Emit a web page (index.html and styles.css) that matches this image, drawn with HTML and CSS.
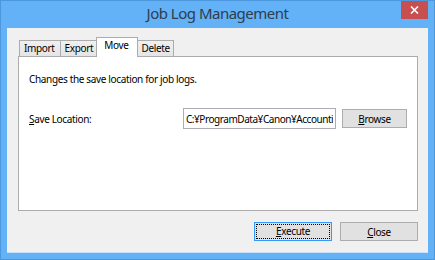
FILE: index.html
```html
<!DOCTYPE html>
<html lang="en">
<head>
    <meta charset="UTF-8">
    <meta name="viewport" content="width=device-width, initial-scale=1.0">
    <title>Job Log Management</title>
    <link rel="stylesheet" href="styles.css">
</head>
<body>

    <div class="window">
        <div class="titlebar">
            <span class="title">Job Log Management</span>
            <button type="button" class="close-x">
                <svg width="9" height="8" viewBox="0 0 9 8">
                    <path d="M1 0.5 L8 7.5 M8 0.5 L1 7.5" stroke="#ffffff" stroke-width="1.6"/>
                </svg>
            </button>
        </div>

        <div class="client">
            <div class="tabs">
                <div class="tab">Import</div>
                <div class="tab">Export</div>
                <div class="tab active">Move</div>
                <div class="tab">Delete</div>
            </div>

            <div class="panel">
                <p class="info">Changes the save location for job logs.</p>
                <div class="row">
                    <label for="location"><u>S</u>ave Location:</label>
                    <input type="text" id="location" value="C:¥ProgramData¥Canon¥Accounting Manager¥JobLog" readonly>
                    <button type="button" class="btn browse"><u>B</u>rowse</button>
                </div>
            </div>

            <div class="footer">
                <button type="button" class="btn default"><span class="focus"><u>E</u>xecute</span></button>
                <button type="button" class="btn"><u>C</u>lose</button>
            </div>
        </div>
    </div>

</body>
</html>
```

FILE: styles.css
```css
body {
    margin: 0;
    font-family: "Noto Sans", "Liberation Sans", sans-serif;
    font-size: 10px;
    letter-spacing: -0.35px;
    color: #000000;
}

.window {
    width: 435px;
    height: 260px;
    box-sizing: border-box;
    background-color: #63b1f6;
    border: 1px solid #4d98dc;
    padding: 0 6px 6px 6px;
    display: flex;
    flex-direction: column;
}

.titlebar {
    height: 27px;
    display: flex;
    justify-content: center;
    align-items: center;
    position: relative;
}

.title {
    font-size: 15px;
    letter-spacing: -0.5px;
    color: #2f3d4c;
    margin-top: -3px;
}

/* window close button sits over the title bar */
.close-x {
    position: absolute;
    top: 0;
    right: 0;
    width: 27px;
    height: 18px;
    border: none;
    padding: 0;
    background-color: #c74f50;
    display: flex;
    align-items: center;
    justify-content: center;
}

.client {
    flex: 1;
    background-color: #f0f0f0;
    padding: 9px 10px 11px 11px;
    display: flex;
    flex-direction: column;
    border-bottom: 1px solid #c9e2f8;
}

.tabs {
    display: flex;
    align-items: flex-end;
    height: 19px;
    padding-left: 1px;
}

.tab {
    height: 16px;
    line-height: 15px;
    box-sizing: border-box;
    padding: 0 5px 0 4px;
    margin-right: -1px;
    border: 1px solid #acacac;
    border-bottom: none;
    background: linear-gradient(#f0f0f0, #e5e5e5);
}

.tab.active {
    position: relative;
    z-index: 1;
    height: 20px;
    margin: 0 -1px -1px -2px;
    padding: 0 8px 0 7px;
    line-height: 15px;
    background: #ffffff;
}

.tab:last-child {
    padding: 0 3px 0 4px;
}

.panel {
    height: 155px;
    box-sizing: border-box;
    background-color: #ffffff;
    border: 1px solid #acacac;
    padding: 0 10px;
}

.info {
    margin: 15px 0 0 0;
}

.row {
    display: flex;
    align-items: center;
    margin-top: 22px;
}

label {
    width: 154px;
}

input {
    width: 153px;
    height: 21px;
    box-sizing: border-box;
    border: 1px solid #abadb3;
    padding: 0 2px;
    font-family: inherit;
    font-size: 10px;
    letter-spacing: -0.45px;
    color: #000000;
    outline: none;
}

.btn {
    height: 19px;
    box-sizing: border-box;
    border: 1px solid #adadad;
    background-color: #e1e1e1;
    font-family: inherit;
    font-size: 10px;
    letter-spacing: -0.35px;
    color: #000000;
    padding: 0;
}

.browse {
    width: 65px;
    margin-left: 6px;
}

.footer {
    margin-top: auto;
    display: flex;
    justify-content: flex-end;
    gap: 8px;
}

.footer .btn {
    width: 78px;
}

.default {
    border-color: #3399ff;
    padding: 1px;
}

.focus {
    display: block;
    height: 100%;
    box-sizing: border-box;
    border: 1px dotted #000000;
    line-height: 13px;
}
```
